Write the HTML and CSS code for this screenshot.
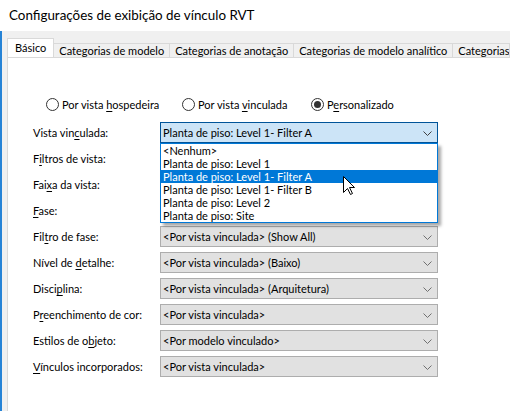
FILE: index.html
```html
<!DOCTYPE html>
<html lang="pt">
<head>
<meta charset="utf-8">
<title>Configurações de exibição de vínculo RVT</title>
<link rel="stylesheet" href="styles.css">
</head>
<body>
<div class="window">
  <div class="titlebar">Configurações de exibição de vínculo RVT</div>
  <div class="frame">
    <div class="tabs">
      <div class="tab active">Básico</div>
      <div class="tab">Categorias de modelo</div>
      <div class="tab">Categorias de anotação</div>
      <div class="tab">Categorias de modelo analítico</div>
      <div class="tab last">Categorias importadas</div>
    </div>
    <div class="panel">
      <div class="radios">
        <label class="radio r1"><span class="circle"></span><span>Por vista <u>h</u>ospedeira</span></label>
        <label class="radio r2"><span class="circle"></span><span>Por vista <u>v</u>inculada</span></label>
        <label class="radio"><span class="circle checked"></span><span>P<u>e</u>rsonalizado</span></label>
      </div>
      <div class="form">
        <div class="label"><span>Vista vin<u>c</u>ulada:</span></div>
        <div class="combo open">
          <span class="value">Planta de piso: Level 1- Filter A</span>
          <svg class="chev" width="9" height="5" viewBox="0 0 9 5"><polyline points="0.5,0.5 4.5,4.5 8.5,0.5" fill="none" stroke="#404040" stroke-width="1"/></svg>
          <ul class="list">
            <li>&lt;Nenhum&gt;</li>
            <li>Planta de piso: Level 1</li>
            <li class="sel">Planta de piso: Level 1- Filter A</li>
            <li>Planta de piso: Level 1- Filter B</li>
            <li>Planta de piso: Level 2</li>
            <li>Planta de piso: Site</li>
          </ul>
        </div>

        <div class="label"><span>F<u>i</u>ltros de vista:</span></div>
        <div class="combo"></div>

        <div class="label"><span>Fai<u>x</u>a da vista:</span></div>
        <div class="combo"></div>

        <div class="label"><span><u>F</u>ase:</span></div>
        <div class="combo"></div>

        <div class="label"><span>Fil<u>t</u>ro de fase:</span></div>
        <div class="combo"><span class="value">&lt;Por vista vinculada&gt; (Show All)</span><svg class="chev" width="9" height="5" viewBox="0 0 9 5"><polyline points="0.5,0.5 4.5,4.5 8.5,0.5" fill="none" stroke="#707070" stroke-width="1"/></svg></div>

        <div class="label"><span>Nível de <u>d</u>etalhe:</span></div>
        <div class="combo"><span class="value">&lt;Por vista vinculada&gt; (Baixo)</span><svg class="chev" width="9" height="5" viewBox="0 0 9 5"><polyline points="0.5,0.5 4.5,4.5 8.5,0.5" fill="none" stroke="#707070" stroke-width="1"/></svg></div>

        <div class="label"><span>Disci<u>p</u>lina:</span></div>
        <div class="combo"><span class="value">&lt;Por vista vinculada&gt; (Arquitetura)</span><svg class="chev" width="9" height="5" viewBox="0 0 9 5"><polyline points="0.5,0.5 4.5,4.5 8.5,0.5" fill="none" stroke="#707070" stroke-width="1"/></svg></div>

        <div class="label"><span>P<u>r</u>eenchimento de cor:</span></div>
        <div class="combo"><span class="value">&lt;Por vista vinculada&gt;</span><svg class="chev" width="9" height="5" viewBox="0 0 9 5"><polyline points="0.5,0.5 4.5,4.5 8.5,0.5" fill="none" stroke="#707070" stroke-width="1"/></svg></div>

        <div class="label"><span>Estilos de o<u>b</u>jeto:</span></div>
        <div class="combo"><span class="value">&lt;Por modelo vinculado&gt;</span><svg class="chev" width="9" height="5" viewBox="0 0 9 5"><polyline points="0.5,0.5 4.5,4.5 8.5,0.5" fill="none" stroke="#707070" stroke-width="1"/></svg></div>

        <div class="label"><span><u>V</u>ínculos incorporados:</span></div>
        <div class="combo"><span class="value">&lt;Por vista vinculada&gt;</span><svg class="chev" width="9" height="5" viewBox="0 0 9 5"><polyline points="0.5,0.5 4.5,4.5 8.5,0.5" fill="none" stroke="#707070" stroke-width="1"/></svg></div>
      </div>
      <svg class="cursor" width="13" height="20" viewBox="0 0 13 20"><path d="M0.5,0.5 L0.5,16.5 L4.5,12.5 L7.5,18.5 L9.5,17.5 L6.5,11.5 L11.5,11.5 Z" fill="#fff" stroke="#000" stroke-width="1" stroke-linejoin="miter"/></svg>
    </div>
  </div>
</div>
</body>
</html>
```

FILE: styles.css
```css
* { box-sizing: border-box; }
html, body { margin: 0; padding: 0; }
body {
  background: #fff;
  font-family: "Lato", "Open Sans", sans-serif;
  font-size: 11px;
  color: #000;
}
.window {
  width: 510px;
  height: 411px;
  overflow: hidden;
  display: flex;
  flex-direction: column;
  background: #fff;
}
.titlebar {
  height: 31px;
  padding-left: 9px;
  font-size: 13.4px;
  line-height: 30px;
  white-space: nowrap;
}
.frame {
  flex: 1;
  display: flex;
  flex-direction: column;
  background: #f0f0f0;
  border-left: 2px solid #2683d6;
  padding: 7px 0 0 5px;
  min-height: 0;
}
.tabs {
  display: flex;
  align-items: flex-end;
  height: 19px;
  white-space: nowrap;
  overflow: hidden;
}
.tab {
  height: 14px;
  line-height: 13px;
  padding: 0 5px;
  border-top: 1px solid #d9d9d9;
  border-right: 1px solid #d9d9d9;
  background: #f0f0f0;
  flex-shrink: 0;
}
.tab.last {
  flex-shrink: 1;
  min-width: 0;
  overflow: hidden;
  text-overflow: clip;
}
.tab.active {
  height: 20px;
  line-height: 18px;
  margin-bottom: -1px;
  padding: 0 7px;
  border-left: 1px solid #d9d9d9;
  background: #fff;
  position: relative;
  z-index: 2;
}
.panel {
  flex: 1;
  background: #fff;
  border: 1px solid #d9d9d9;
  border-right: none;
  border-bottom: none;
  position: relative;
  padding: 39px 0 0 25px;
}
.radios {
  display: flex;
  align-items: center;
  height: 15px;
  margin-left: 13px;
  white-space: nowrap;
}
.radio {
  display: flex;
  align-items: center;
  gap: 3px;
}
.radio.r1 { width: 136px; }
.radio.r2 { width: 129px; }
.circle {
  width: 13px;
  height: 13px;
  border: 1px solid #333;
  border-radius: 50%;
  background: #fff;
  display: flex;
  align-items: center;
  justify-content: center;
}
.circle.checked::after {
  content: "";
  width: 7px;
  height: 7px;
  border-radius: 50%;
  background: #333;
}
u { text-decoration-thickness: 1px; text-underline-offset: 2px; }
.form {
  margin-top: 10px;
  display: grid;
  grid-template-columns: 127px 278px;
  grid-auto-rows: 21px;
  row-gap: 5px;
}
.label {
  line-height: 21px;
  white-space: nowrap;
}
.combo {
  position: relative;
  display: flex;
  align-items: center;
  justify-content: space-between;
  border: 1px solid #adadad;
  background: #e1e1e1;
  padding: 0 5px 0 2px;
  white-space: nowrap;
}
.combo.open {
  background: #cce4f7;
  border-color: #005499;
  z-index: 3;
}
.chev { display: block; margin-top: 1px; }
.list {
  position: absolute;
  left: -1px;
  top: 20px;
  width: 278px;
  margin: 0;
  padding: 0;
  list-style: none;
  background: #fff;
  border: 1px solid #0078d7;
  box-shadow: 3px 3px 3px rgba(0, 0, 0, 0.35);
}
.list li {
  height: 13px;
  line-height: 13px;
  padding-left: 2px;
}
.list li.sel {
  background: #0078d7;
  color: #fff;
}
.cursor {
  position: absolute;
  left: 335px;
  top: 118px;
  z-index: 5;
}
```
